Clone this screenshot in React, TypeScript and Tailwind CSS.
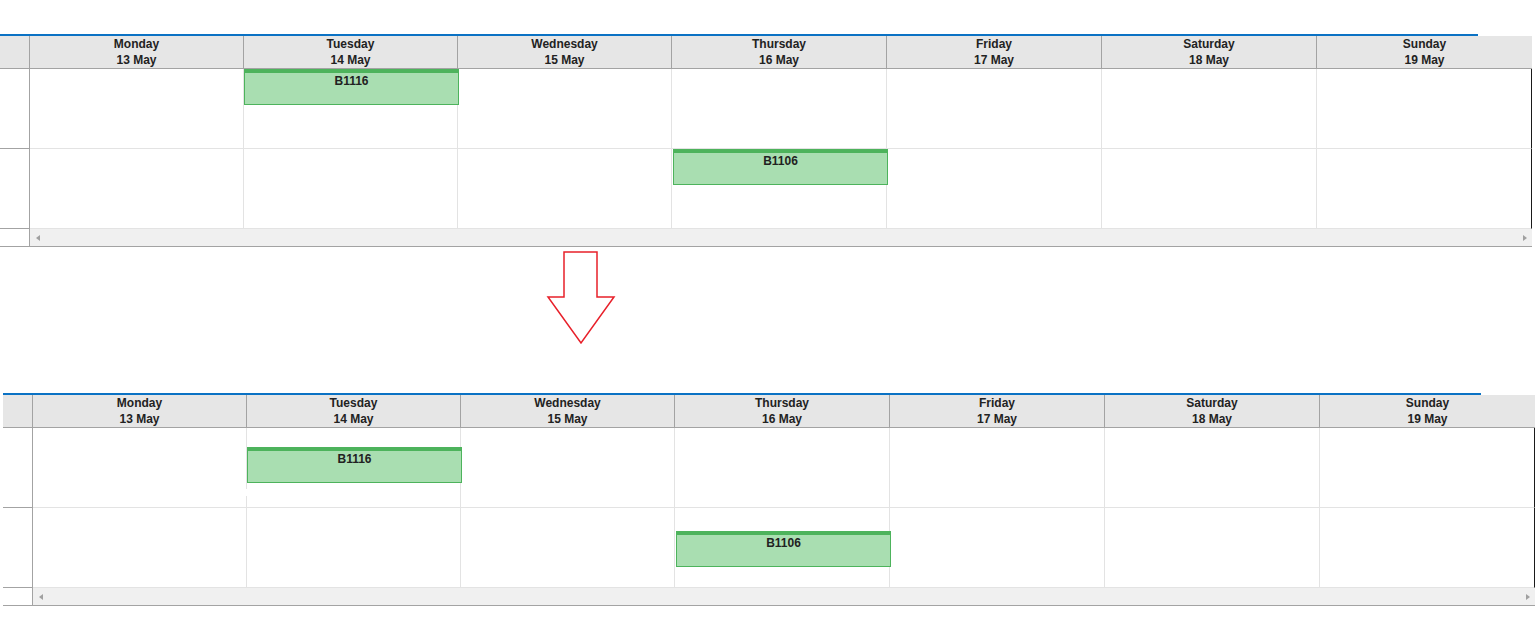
import React from 'react'

type CalEvent = {
  label: string
  row: number
  col: number
  top: number
  left: number
  gap?: boolean
}

const days = [
  { name: 'Monday', date: '13 May' },
  { name: 'Tuesday', date: '14 May' },
  { name: 'Wednesday', date: '15 May' },
  { name: 'Thursday', date: '16 May' },
  { name: 'Friday', date: '17 May' },
  { name: 'Saturday', date: '18 May' },
  { name: 'Sunday', date: '19 May' },
]

const cols = 'grid grid-cols-[30px_214px_214px_214px_215px_215px_215px_215px]'

function EventBox({ ev }: { ev: CalEvent }) {
  return (
    <>
      <div
        className="absolute z-10 h-[36px] w-[215px] bg-[#a9deb1] border border-[#4db35c] border-t-4 text-center text-[12px] leading-[16px] font-bold text-[#222]"
        style={{ top: ev.top, left: ev.left }}
      >
        {ev.label}
      </div>
      {/* the grid line is not redrawn just below a dropped event */}
      {ev.gap && (
        <div
          className="absolute z-10 left-[-1px] w-[1px] h-[7px] bg-white"
          style={{ top: ev.top + 42 }}
        />
      )}
    </>
  )
}

function Scheduler({ events }: { events: CalEvent[] }) {
  return (
    <div className="w-[1532px]">
      <div className="h-[2px] w-[1478px] bg-[#0b72c4]" />

      {/* header */}
      <div className={`${cols} h-[33px] bg-[#e6e6e6] border-b border-[#a3a3a3]`}>
        <div className="border-r border-[#a3a3a3]" />
        {days.map((d, i) => (
          <div
            key={d.name}
            className={`text-center text-[12px] leading-[16px] font-bold text-[#222] ${
              i < 6 ? 'border-r border-[#a3a3a3]' : ''
            }`}
          >
            <div>{d.name}</div>
            <div>{d.date}</div>
          </div>
        ))}
      </div>

      {/* rows */}
      {[0, 1].map((row) => (
        <div key={row} className={`${cols} h-[80px]`}>
          <div className="border-r border-b border-[#a3a3a3] bg-white" />
          {days.map((d, i) => (
            <div
              key={d.name}
              className={`relative border-b border-[#e3e3e3] ${
                i < 6 ? 'border-r border-r-[#e3e3e3]' : 'border-r border-r-[#1a1a1a]'
              }`}
            >
              {events
                .filter((e) => e.row === row && e.col === i)
                .map((e) => (
                  <EventBox key={e.label} ev={e} />
                ))}
            </div>
          ))}
        </div>
      ))}

      {/* scrollbar */}
      <div className="flex h-[18px] border-b border-[#a3a3a3]">
        <div className="w-[30px] border-r border-[#a3a3a3] bg-white" />
        <div className="flex flex-1 items-center justify-between bg-[#f0f0f0] pl-[6px] pr-[5px]">
          <div className="h-0 w-0 border-y-[3.5px] border-y-transparent border-r-[4px] border-r-[#a0a0a0]" />
          <div className="h-0 w-0 border-y-[3.5px] border-y-transparent border-l-[4px] border-l-[#a0a0a0]" />
        </div>
      </div>
    </div>
  )
}

export default function App() {
  const before: CalEvent[] = [
    { label: 'B1116', row: 0, col: 1, top: 0, left: 0 },
    { label: 'B1106', row: 1, col: 3, top: 0, left: 1 },
  ]
  const after: CalEvent[] = [
    { label: 'B1116', row: 0, col: 1, top: 19, left: 0, gap: true },
    { label: 'B1106', row: 1, col: 3, top: 23, left: 1 },
  ]

  return (
    <div className="min-h-[643px] w-[1538px] bg-white font-['Liberation_Sans',Arial,sans-serif]">
      <div className="pt-[34px]">
        <Scheduler events={before} />
      </div>

      {/* arrow between the two states */}
      <div className="h-[146px] pt-[4px] pl-[546px]">
        <svg width="70" height="95" viewBox="0 0 70 95">
          <polygon
            points="18,1 51,1 51,46 68,46 35,92 2,46 18,46"
            fill="none"
            stroke="#e8202a"
            strokeWidth="1.5"
          />
        </svg>
      </div>

      <div className="pl-[3px]">
        <Scheduler events={after} />
      </div>
    </div>
  )
}
